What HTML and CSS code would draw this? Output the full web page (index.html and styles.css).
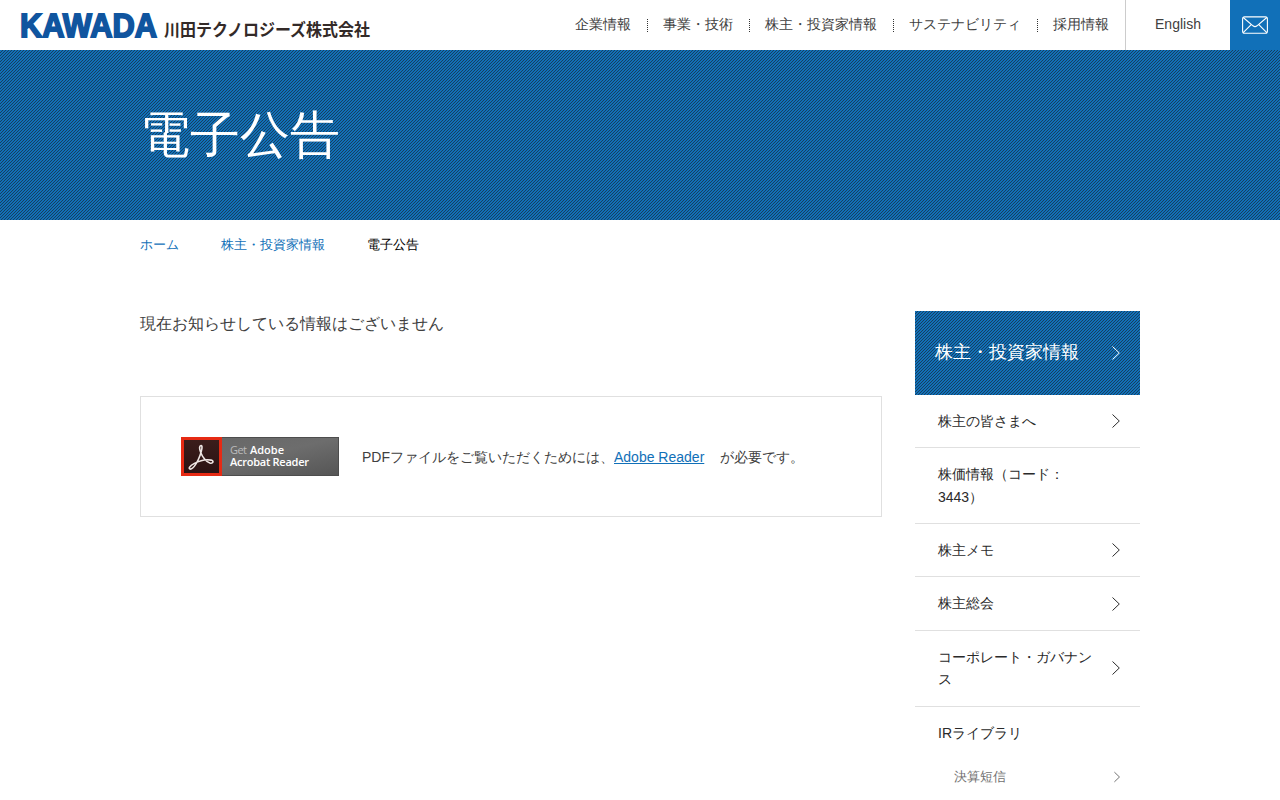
FILE: index.html
```html
<!DOCTYPE html>
<html lang="ja">
<head>
<meta charset="utf-8">
<title>電子公告</title>
<link rel="stylesheet" href="styles.css">
</head>
<body>
<header class="header">
  <a class="logo" href="#">
    <svg width="352" height="40" viewBox="0 0 352 40">
      <text class="logo-mark" x="0" y="36.500" textLength="137" lengthAdjust="spacingAndGlyphs">KAWADA</text>
      <text class="logo-name" x="144" y="36" textLength="206" lengthAdjust="spacingAndGlyphs">川田テクノロジーズ株式会社</text>
    </svg>
  </a>
  <nav class="nav">
    <a href="#">企業情報</a><a href="#">事業・技術</a><a href="#">株主・投資家情報</a><a href="#">サステナビリティ</a><a href="#">採用情報</a>
  </nav>
  <a class="lang" href="#">English</a>
  <a class="mail" href="#" aria-label="mail">
    <svg width="26" height="18" viewBox="0 0 26 18" fill="none" stroke="#fff" stroke-width="1.1"><rect x=".6" y=".9" width="24.8" height="16.400" rx="2"/><path d="M1.200 1.500 11 9.800q2 1.600 4 0L24.800 1.500M1.200 16.700 9.200 8.600M24.800 16.700 16.800 8.600"/></svg>
  </a>
</header>
<div class="hero"><h1>電子公告</h1></div>
<ol class="crumbs"><li><a href="#">ホーム</a></li><li><a href="#">株主・投資家情報</a></li><li>電子公告</li></ol>
<div class="content">
  <main class="main">
    <p class="notice">現在お知らせしている情報はございません</p>
    <div class="reader">
      <svg class="badge" width="158" height="39" viewBox="0 0 158 39">
        <defs>
          <linearGradient id="gray" x2="1" y2="1"><stop offset="0" stop-color="#666"/><stop offset=".5" stop-color="#6d6d6d"/><stop offset="1" stop-color="#555"/></linearGradient>
          <linearGradient id="dark" x2="0" y2="1"><stop offset="0" stop-color="#3b1d1b"/><stop offset="1" stop-color="#2a1213"/></linearGradient>
        </defs>
        <rect x=".5" y=".5" width="157" height="38" fill="url(#gray)" stroke="#4d4d4d"/>
        <rect width="41" height="39" fill="#e62a14"/>
        <rect x="3" y="3" width="35" height="33" fill="url(#dark)"/>
        <path d="M20 8.500c-2 .3-1.700 3.300-.2 7.200 1.500 4 5.500 9.200 9 10.300 3.200.8 4.600-2 1.300-2.900-4.500-1-11.800.7-16.700 3.300-5 2.600-6.400 5.600-4 5.700 3.200 0 7.500-7.800 9.700-13.900 1.800-5 2.700-9.700.9-9.700Z" fill="none" stroke="#eee5e3" stroke-width="1.6"/>
        <text class="badge-get" x="49" y="17" textLength="17">Get</text>
        <text class="badge-name" x="69" y="17" textLength="34">Adobe</text>
        <text class="badge-name" x="49" y="29" textLength="79">Acrobat Reader</text>
      </svg>
      <p>PDFファイルをご覧いただくためには、<a href="#">Adobe Reader</a>が必要です。</p>
    </div>
  </main>
  <aside class="side">
    <a class="side-title" href="#"><span>株主・投資家情報</span><svg class="arrow" viewBox="0 0 8 14"><path d="M.5.5 7.300 7 .5 13.500"/></svg></a>
    <a class="item" href="#"><span>株主の皆さまへ</span><svg class="arrow" viewBox="0 0 8 14"><path d="M.5.5 7.300 7 .5 13.500"/></svg></a>
    <a class="item" href="#"><span>株価情報（コード：3443）</span></a>
    <a class="item" href="#"><span>株主メモ</span><svg class="arrow" viewBox="0 0 8 14"><path d="M.5.5 7.300 7 .5 13.500"/></svg></a>
    <a class="item" href="#"><span>株主総会</span><svg class="arrow" viewBox="0 0 8 14"><path d="M.5.5 7.300 7 .5 13.500"/></svg></a>
    <a class="item" href="#"><span>コーポレート・ガバナンス</span><svg class="arrow" viewBox="0 0 8 14"><path d="M.5.5 7.300 7 .5 13.500"/></svg></a>
    <a class="item last" href="#"><span>IRライブラリ</span></a>
    <a class="sub" href="#">決算短信<svg class="arrow" viewBox="0 0 8 14"><path d="M.5.5 7.300 7 .5 13.500"/></svg></a>
  </aside>
</div>
</body>
</html>
```
FILE: styles.css
```css
* { box-sizing: border-box; }
body { margin: 0; height: 800px; overflow: hidden; background: #fff; color: #404040; font: 14px/22.4px "Liberation Sans", Arial, sans-serif; }
a { color: inherit; text-decoration: none; }
h1, p, ol { margin: 0; padding: 0; }
.header { display: flex; height: 50px; }
.logo { padding: 0 0 0 20px; margin-right: auto; }
.logo svg { display: block; overflow: visible; }
.logo-mark { font: bold 33.500px "Liberation Sans", sans-serif; fill: #10559f; stroke: #10559f; stroke-width: 1.800px; }
.logo-name { font: bold 17px "Noto Sans CJK JP", sans-serif; fill: #332a28; }
.nav { display: flex; align-items: center; padding: 0 16px 2px 0; }
.nav a + a { margin-left: 16px; padding-left: 16px; position: relative; }
.nav a + a::before { content: ""; position: absolute; left: 0; top: 6px; height: 13px; border-left: 1px dotted #333; }
.lang { width: 105px; border-left: 1px solid #ccc; text-align: center; padding: 13px 0 0; }
.mail { display: flex; align-items: center; justify-content: center; width: 50px; background: #1170b8; }
.hero, .side-title { background: #1170b8 url("data:image/svg+xml,%3Csvg xmlns='http://www.w3.org/2000/svg' width='3' height='3' shape-rendering='crispEdges'%3E%3Cpath fill='%23173f5f' d='M2 0h1v1h-1zM1 1h1v1h-1zM0 2h1v1h-1z'/%3E%3C/svg%3E"); color: #fff; }
.hero { height: 170px; padding: 45px 140px; }
h1 { font-size: 50px; line-height: 80px; font-weight: normal; }
.crumbs { display: flex; gap: 42px; list-style: none; padding: 14px 140px 0; height: 91px; font-size: 13px; color: #000; }
.crumbs a { color: #1170b8; }
.content { display: flex; justify-content: space-between; width: 1000px; margin: 0 auto; }
.main { width: 742px; }
.notice { font-size: 16px; line-height: 26px; height: 85px; }
.reader { display: flex; height: 121px; border: 1px solid #e0e0e0; padding: 40px; }
.badge { flex: none; margin-right: 23px; }
.badge-get, .badge-name { font: 11px "Open Sans", sans-serif; fill: #bbb; }
.badge-name { font-weight: 600; fill: #fff; }
.reader p { padding-top: 9px; white-space: nowrap; }
.reader a { color: #1170b8; text-decoration: underline; margin-right: 16px; }
.side { width: 225px; }
.arrow { width: 8px; height: 14px; flex: none; fill: none; stroke: currentColor; stroke-width: 1; }
.side-title { display: flex; justify-content: space-between; align-items: center; height: 84px; margin-bottom: -.2px; padding: 0 20px; font-size: 18px; }
.side-title span { padding-bottom: 2px; }
.item { display: flex; justify-content: space-between; align-items: center; padding: 15px 20px 15px 23px; border-bottom: 1px solid #e0e0e0; color: #2a2a2a; }
.item span { width: 157px; }
.last { border: 0; }
.sub { display: flex; justify-content: space-between; align-items: center; padding: 7px 20px 0 39px; font-size: 13px; color: #707070; }
.sub .arrow { width: 6px; height: 12px; stroke: #444; }
```
